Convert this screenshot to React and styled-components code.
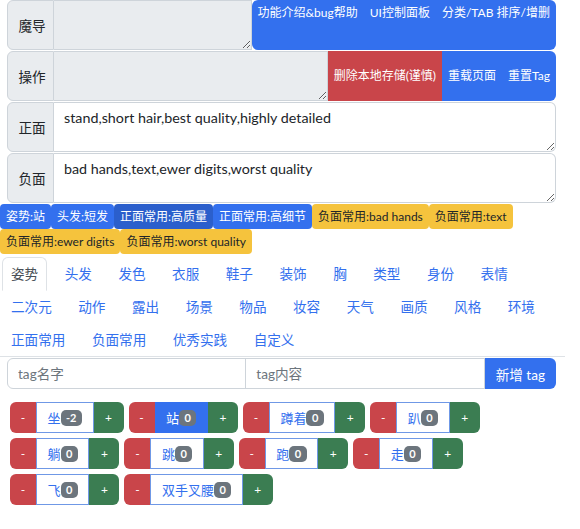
import React from "react";
import styled, { createGlobalStyle, css } from "styled-components";

const BLUE = "#3370ee";
const RED = "#c9454a";
const GREEN = "#3b7d52";
const YELLOW = "#f5c33d";

const Global = createGlobalStyle`
  body {
    margin: 0;
    font-family: Lato, "Noto Sans CJK SC", sans-serif;
    font-size: 13.6px;
    color: #212529;
    background: #fff;
  }
  * { box-sizing: border-box; }
`;

const Panel = styled.div`
  margin: 0 24px 0 7px;
`;

const Row = styled.div`
  display: flex;
  height: 50px;
  margin-bottom: 1px;
`;

const Label = styled.div`
  width: 47px;
  flex: none;
  display: flex;
  align-items: center;
  justify-content: center;
  padding-left: 3px;
  background: #e9ecef;
  border: 1px solid #ced4da;
  border-radius: 6px 0 0 6px;
  font-size: 13.6px;
  color: #212529;
`;

const Area = styled.textarea`
  flex: 1;
  min-width: 0;
  height: 100%;
  margin: 0;
  border: 1px solid #ced4da;
  border-left: none;
  border-radius: ${(p) => (p.disabled ? "0" : "0 6px 6px 0")};
  background: ${(p) => (p.disabled ? "#e9ecef" : "#fff")};
  padding: 5px 10px;
  font-family: inherit;
  font-size: 14.3px;
  line-height: 20px;
  color: #212529;
  resize: vertical;
  outline: none;
`;

const Group = styled.div`
  display: flex;
  flex: none;
  overflow: hidden;
  border-radius: ${(p) => (p.top ? "6px" : "0 6px 6px 0")};
`;

const Btn = styled.button`
  display: flex;
  align-items: ${(p) => (p.top ? "flex-start" : "center")};
  padding: ${(p) => (p.top ? "3px 6px 0" : "0 6px 4px")};
  border: none;
  margin: 0;
  background: ${(p) => (p.red ? RED : BLUE)};
  color: #fff;
  font-family: inherit;
  font-size: 12px;
  white-space: nowrap;
`;

const TagBar = styled.div`
  display: flex;
  flex-wrap: wrap;
  width: 580px;
`;

const Tag = styled.span`
  display: inline-block;
  padding: 3.5px 6px;
  line-height: 18px;
  font-size: 12px;
  border-radius: 4px;
  ${(p) =>
    p.kind === "warn"
      ? css`
          background: ${YELLOW};
          color: #212529;
        `
      : css`
          background: ${p.kind === "dark" ? "#2b5fcc" : BLUE};
          color: #fff;
        `}
`;

const Tabs = styled.ul`
  list-style: none;
  margin: 3px 0 0;
  padding: 0 0 0 2px;
  display: flex;
  flex-wrap: wrap;
  border-bottom: 1px solid #dee2e6;
  width: 565px;
`;

const TabItem = styled.li`
  margin-right: 8.5px;
  margin-bottom: -1px;
`;

const TabLink = styled.a`
  display: block;
  padding: 6px 8px;
  line-height: 20px;
  font-size: 13.6px;
  border: 1px solid transparent;
  border-radius: 6px 6px 0 0;
  color: ${BLUE};
  ${(p) =>
    p.active &&
    css`
      color: #495057;
      border-color: #dee2e6 #dee2e6 #fff;
      background: #fff;
    `}
`;

const AddRow = styled.div`
  display: flex;
  height: 31px;
  margin: 1px 24px 0 7px;
`;

const Field = styled.input`
  flex: 1;
  min-width: 0;
  border: 1px solid #ced4da;
  margin: 0 0 0 ${(p) => (p.first ? "0" : "-1px")};
  border-radius: ${(p) => (p.first ? "6px 0 0 6px" : "0")};
  padding: 0 10px;
  font-family: inherit;
  font-size: 13.6px;
  color: #212529;
  &::placeholder {
    color: #6c757d;
  }
`;

const AddBtn = styled.button`
  border: none;
  background: ${BLUE};
  color: #fff;
  padding: 0 11px;
  border-radius: 0 6px 6px 0;
  font-family: inherit;
  font-size: 13.6px;
`;

const Counters = styled.div`
  display: flex;
  flex-wrap: wrap;
  gap: 5px;
  margin: 13px 24px 0 10px;
`;

const Counter = styled.div`
  display: flex;
  height: 31px;
`;

const Side = styled.button`
  width: ${(p) => (p.plus ? 30 : 26)}px;
  border: none;
  margin: 0;
  padding: 0;
  color: #fff;
  font-family: inherit;
  font-size: 12px;
  background: ${(p) => (p.plus ? GREEN : RED)};
  border-radius: ${(p) => (p.plus ? "0 6px 6px 0" : "6px 0 0 6px")};
`;

const Mid = styled.div`
  display: flex;
  align-items: center;
  padding: 0 10.5px;
  border: 1px solid ${(p) => (p.active ? BLUE : "#6f98e6")};
  background: ${(p) => (p.active ? BLUE : "#fff")};
  color: ${(p) => (p.active ? "#fff" : BLUE)};
  font-size: 13px;
`;

const Badge = styled.span`
  display: inline-block;
  background: #6c757d;
  color: #fff;
  font-size: 11px;
  font-weight: 700;
  line-height: 16px;
  padding: 0 5.5px;
  border-radius: 5px;
`;

const tags = [
  ["姿势:站", "blue"],
  ["头发:短发", "blue"],
  ["正面常用:高质量", "dark"],
  ["正面常用:高细节", "blue"],
  ["负面常用:bad hands", "warn"],
  ["负面常用:text", "warn"],
  ["负面常用:ewer digits", "warn"],
  ["负面常用:worst quality", "warn"],
];

const tabs = [
  "姿势", "头发", "发色", "衣服", "鞋子", "装饰", "胸", "类型", "身份", "表情",
  "二次元", "动作", "露出", "场景", "物品", "妆容", "天气", "画质", "风格", "环境",
  "正面常用", "负面常用", "优秀实践", "自定义",
];

const counters = [
  ["坐", -2], ["站", 0, true], ["蹲着", 0], ["趴", 0],
  ["躺", 0], ["跳", 0], ["跑", 0], ["走", 0],
  ["飞", 0], ["双手叉腰", 0],
];

export default function App() {
  return (
    <>
      <Global />
      <Panel>
        <Row>
          <Label>魔导</Label>
          <Area disabled />
          <Group top>
            <Btn top>功能介绍&amp;bug帮助</Btn>
            <Btn top>UI控制面板</Btn>
            <Btn top>分类/TAB 排序/增删</Btn>
          </Group>
        </Row>
        <Row>
          <Label>操作</Label>
          <Area disabled />
          <Group>
            <Btn red>删除本地存储(谨慎)</Btn>
            <Btn>重载页面</Btn>
            <Btn>重置Tag</Btn>
          </Group>
        </Row>
        <Row>
          <Label>正面</Label>
          <Area defaultValue="stand,short hair,best quality,highly detailed" />
        </Row>
        <Row>
          <Label>负面</Label>
          <Area defaultValue="bad hands,text,ewer digits,worst quality" />
        </Row>
      </Panel>
      <TagBar>
        {tags.map(([t, k]) => (
          <Tag key={t} kind={k}>{t}</Tag>
        ))}
      </TagBar>
      <Tabs>
        {tabs.map((t, i) => (
          <TabItem key={t}>
            <TabLink active={i === 0}>{t}</TabLink>
          </TabItem>
        ))}
      </Tabs>
      <AddRow>
        <Field first placeholder="tag名字" />
        <Field placeholder="tag内容" />
        <AddBtn>新增 tag</AddBtn>
      </AddRow>
      <Counters>
        {counters.map(([name, n, active]) => (
          <Counter key={name}>
            <Side>-</Side>
            <Mid active={active}>
              {name}
              <Badge>{n}</Badge>
            </Mid>
            <Side plus>+</Side>
          </Counter>
        ))}
      </Counters>
    </>
  );
}
